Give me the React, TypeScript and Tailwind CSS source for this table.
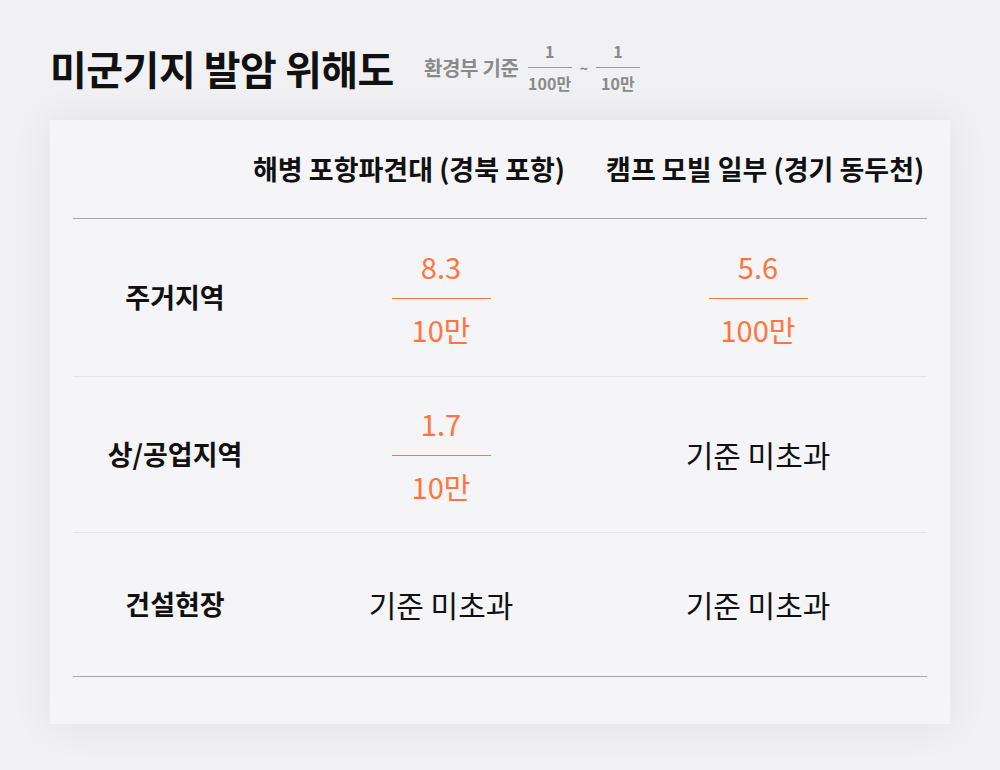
import React from 'react';

const font = { fontFamily: '"Noto Sans CJK KR", "Noto Sans", sans-serif' };

function Frac({ top, bottom }: { top: string; bottom: string }) {
  return (
    <div className="flex flex-col items-center text-[#ff7440]">
      <span className="text-[29px] leading-[32px]">{top}</span>
      <div className="w-[99px] h-px bg-[#ff7440] mt-[16px] mb-[14px]" />
      <span className="text-[29px] leading-[32px]">{bottom}</span>
    </div>
  );
}

function MiniFrac({ bottom }: { bottom: string }) {
  return (
    <div className="flex flex-col items-center text-[#8a8a8a] text-[16px] font-bold">
      <span className="leading-[18px]">1</span>
      <div className="w-[44px] h-px bg-[#999] mt-[7px] mb-[6px]" />
      <span className="leading-[18px]">{bottom}</span>
    </div>
  );
}

const rows = [
  { label: '주거지역', a: <Frac top="8.3" bottom="10만" />, b: <Frac top="5.6" bottom="100만" />, h: 'h-[158px]' },
  { label: '상/공업지역', a: <Frac top="1.7" bottom="10만" />, b: '기준 미초과', h: 'h-[156px]' },
  { label: '건설현장', a: '기준 미초과', b: '기준 미초과', h: 'h-[144px]' },
];

export default function App() {
  return (
    <div className="w-[1000px] h-[770px] bg-[#f1f1f3] pt-[36px] px-[50px]" style={font}>
      <header className="flex items-center h-[64px] mb-[20px]">
        <h1 className="text-[40px] font-bold text-[#111] tracking-[-0.5px]">미군기지 발암 위해도</h1>
        <span className="ml-[30px] text-[20px] font-bold text-[#8a8a8a] tracking-[-0.3px]">환경부 기준</span>
        <div className="ml-[9px] -mt-[2px]"><MiniFrac bottom="100만" /></div>
        <span className="mx-[8px] text-[14px] font-bold text-[#8a8a8a]">~</span>
        <div className="-mt-[2px]"><MiniFrac bottom="10만" /></div>
      </header>

      <section className="w-[900px] h-[604px] bg-[#f5f5f7] shadow-[0_0_40px_rgba(0,0,0,0.07)] px-[23px]">
        <div className="flex items-center h-[99px] border-b border-[#a9a9a9] text-[27px] font-bold text-[#111]">
          <span className="ml-[180px]">해병 포항파견대 (경북 포항)</span>
          <span className="ml-[41px]">캠프 모빌 일부 (경기 동두천)</span>
        </div>
        {rows.map((r, i) => (
          <div
            key={r.label}
            className={`grid grid-cols-[204px_328px_306px] items-center ${r.h} ${i < rows.length - 1 ? 'border-b border-[#e2e2e4]' : 'border-b border-[#a9a9a9]'}`}
          >
            <span className="text-center text-[27px] font-bold text-[#111]">{r.label}</span>
            <div className="flex justify-center text-[30px] text-[#111]">{r.a}</div>
            <div className="flex justify-center text-[30px] text-[#111]">{r.b}</div>
          </div>
        ))}
      </section>
    </div>
  );
}
